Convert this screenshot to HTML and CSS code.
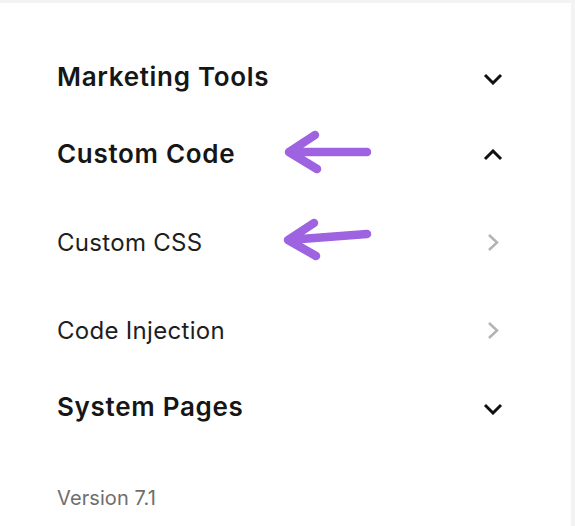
FILE: index.html
```html
<!DOCTYPE html>
<html>
<head>
<meta charset="utf-8">
<link rel="stylesheet" href="styles.css">
</head>
<body>
<div class="panel">
  <nav class="menu">
    <div class="row heading">
      <span>Marketing Tools</span>
      <svg class="chev down" width="20" height="12" viewBox="0 0 20 12"><path d="M2 2 L10 10 L18 2" fill="none" stroke="#111" stroke-width="3"/></svg>
    </div>
    <div class="row heading">
      <span>Custom Code</span>
      <svg class="chev up" width="20" height="12" viewBox="0 0 20 12"><path d="M2 10 L10 2 L18 10" fill="none" stroke="#111" stroke-width="3"/></svg>
    </div>
    <div class="sub">
      <div class="row item">
        <span>Custom CSS</span>
        <svg class="chev right" width="14" height="19" viewBox="0 0 14 19"><path d="M3 2 L11 9.5 L3 17" fill="none" stroke="#b3b3b3" stroke-width="2.5"/></svg>
      </div>
      <div class="row item">
        <span>Code Injection</span>
        <svg class="chev right" width="14" height="19" viewBox="0 0 14 19"><path d="M3 2 L11 9.5 L3 17" fill="none" stroke="#b3b3b3" stroke-width="2.5"/></svg>
      </div>
    </div>
    <div class="row heading last">
      <span>System Pages</span>
      <svg class="chev down" width="20" height="12" viewBox="0 0 20 12"><path d="M2 2 L10 10 L18 2" fill="none" stroke="#111" stroke-width="3"/></svg>
    </div>
  </nav>
  <div class="version">Version 7.1</div>
  <svg class="arrows" width="571" height="523" viewBox="0 3 571 523">
    <g fill="none" stroke="#9d63e0" stroke-width="8.5" stroke-linecap="round" stroke-linejoin="round">
      <path d="M367 152 L289 152 M315 135 L289 152 L317 169"/>
      <path d="M367 234 L288 240 M314 223 L288 240 L316 256"/>
    </g>
  </svg>
</div>
</body>
</html>
```

FILE: styles.css
```css
html, body {
  margin: 0;
  padding: 0;
}
body {
  background: #f3f3f3;
  width: 575px;
  height: 526px;
  overflow: hidden;
}
.panel {
  position: relative;
  margin-top: 3px;
  width: 571px;
  height: 523px;
  background: #ffffff;
  font-family: Inter, "Noto Sans", sans-serif;
  color: #161616;
}
.menu {
  display: flex;
  flex-direction: column;
  padding: 41px 68px 0 57px;
}
.row {
  display: flex;
  align-items: center;
  justify-content: space-between;
}
.heading {
  height: 64px;
  font-size: 26px;
  font-weight: 600;
  letter-spacing: 0.7px;
}
.heading + .heading {
  margin-top: 13px;
}
.sub {
  display: flex;
  flex-direction: column;
  padding-top: 13px;
}
.item {
  height: 88px;
  font-size: 24px;
  font-weight: 400;
  color: #1e1e1e;
  letter-spacing: 0.3px;
}
.chev.down { position: relative; top: 3px; }
.chev.up { position: relative; top: 2px; }
.chev.right { margin-right: 3px; }
.version {
  margin: 48px 0 0 57px;
  font-size: 20px;
  color: #6e6e6e;
  letter-spacing: 0.1px;
}
.arrows {
  position: absolute;
  left: 0;
  top: 0;
  pointer-events: none;
}
```
